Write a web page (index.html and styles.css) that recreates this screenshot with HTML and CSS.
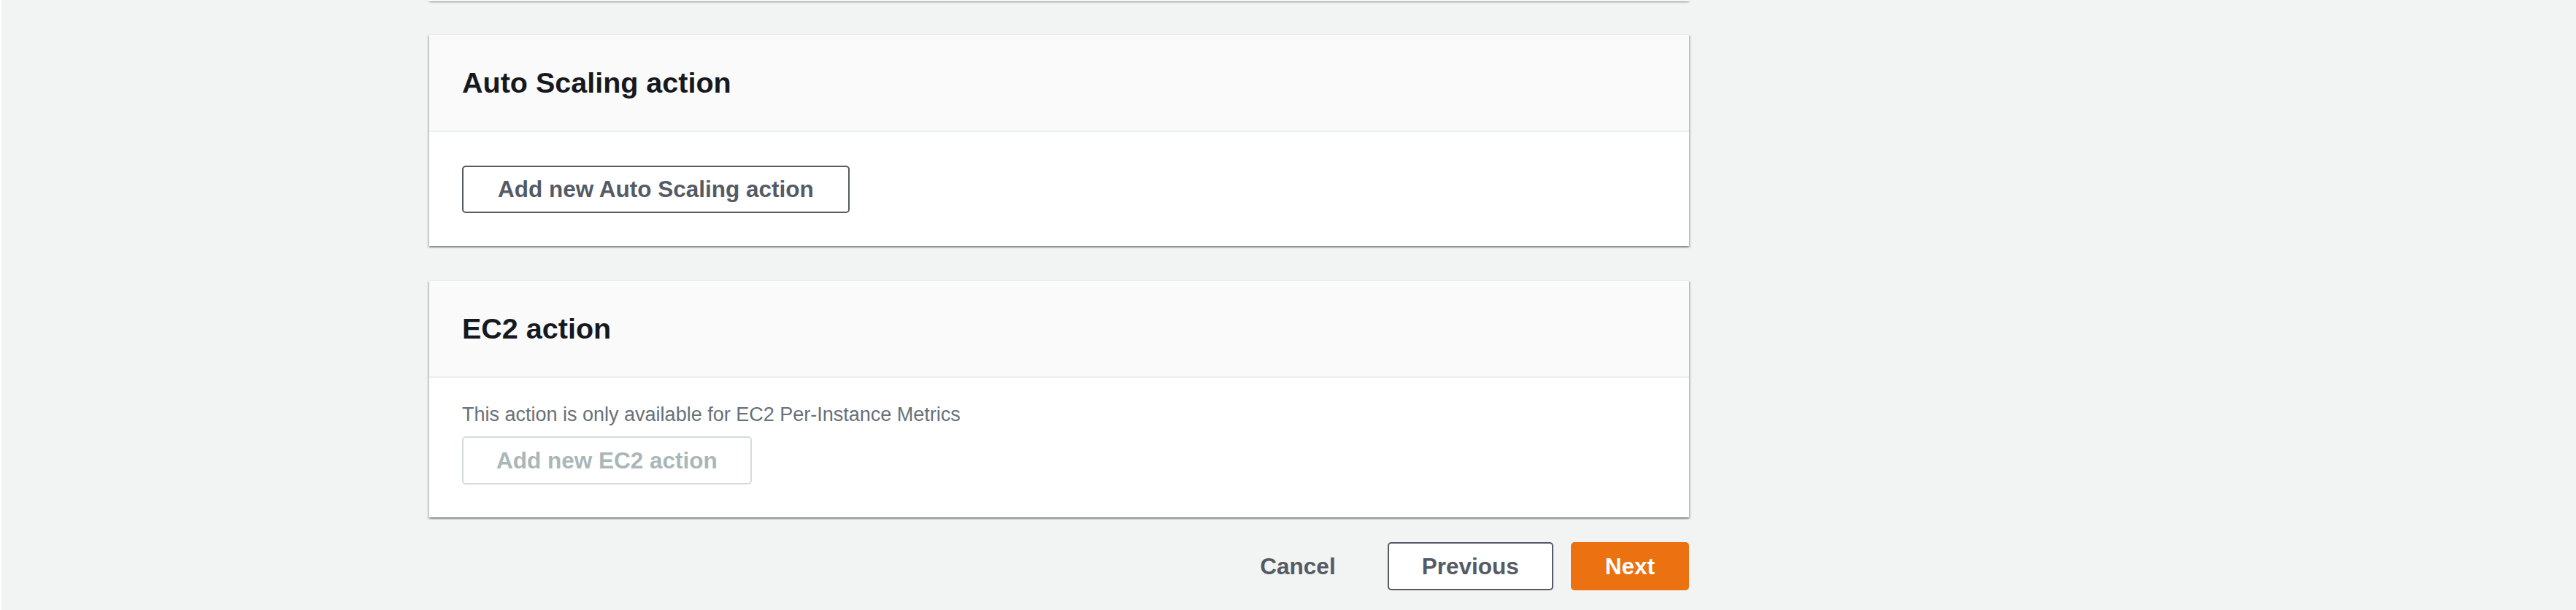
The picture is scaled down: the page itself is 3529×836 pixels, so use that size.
FILE: index.html
```html
<!DOCTYPE html>
<html lang="en">
<head>
<meta charset="utf-8">
<title>Configure actions</title>
<link rel="stylesheet" href="styles.css">
</head>
<body>
<div class="page">
  <main class="main">
    <div class="card card-stub"></div>

    <section class="card card-asg">
      <header class="card-header"><h2>Auto Scaling action</h2></header>
      <div class="card-body body-asg">
        <button class="btn btn-normal btn-wide" type="button">Add new Auto Scaling action</button>
      </div>
    </section>

    <section class="card card-ec2">
      <header class="card-header"><h2>EC2 action</h2></header>
      <div class="card-body body-ec2">
        <p class="hint">This action is only available for EC2 Per-Instance Metrics</p>
        <button class="btn btn-disabled" type="button" disabled>Add new EC2 action</button>
      </div>
    </section>

    <footer class="actions">
      <button class="btn btn-link" type="button">Cancel</button>
      <button class="btn btn-normal" type="button">Previous</button>
      <button class="btn btn-primary" type="button">Next</button>
    </footer>
  </main>
</div>
</body>
</html>
```

FILE: styles.css
```css
html, body {
  margin: 0;
  padding: 0;
}

body {
  background: #f2f3f3;
  font-family: "Liberation Sans", Arial, sans-serif;
  color: #16191f;
  height: 836px;
  overflow: hidden;
  border-left: 2px solid #ffffff;
  box-sizing: border-box;
}

.page {
  display: grid;
  grid-template-columns: 586px 1726px 1fr;
}

.main {
  grid-column: 2;
  display: flex;
  flex-direction: column;
}

.card {
  background: #ffffff;
  box-shadow:
    0 2px 2px 0 rgba(0, 28, 36, 0.3),
    2px 2px 2px 0 rgba(0, 28, 36, 0.15),
    -2px 2px 2px 0 rgba(0, 28, 36, 0.15);
}

.card-stub {
  height: 1px;
}

.card-asg {
  margin-top: 46px;
  border-top: 1px solid #eaeded;
}

.card-ec2 {
  margin-top: 47px;
  border-top: 1px solid #eaeded;
}

.card-header {
  background: #fafafa;
  border-bottom: 2px solid #eaeded;
  height: 133px;
  padding: 0 45px;
  display: flex;
  align-items: center;
  box-sizing: border-box;
}

.card-header h2 {
  margin: 0;
  font-size: 39.5px;
  line-height: 59px;
  font-weight: 700;
  color: #16191f;
}

.card-body {
  padding: 0 45px;
  display: flex;
  flex-direction: column;
  align-items: flex-start;
}

.body-asg {
  padding-top: 46px;
  padding-bottom: 45px;
}

.body-ec2 {
  padding-top: 30px;
  padding-bottom: 45px;
}

.hint {
  margin: 0 0 9px 0;
  font-size: 27px;
  line-height: 41px;
  color: #687078;
}

.btn {
  font-family: "Liberation Sans", Arial, sans-serif;
  font-size: 31.5px;
  font-weight: 700;
  line-height: 61px;
  height: 65px;
  padding: 0 45px;
  border: 2px solid transparent;
  border-radius: 5px;
  background: transparent;
  color: #545b64;
  box-sizing: border-box;
  white-space: nowrap;
}

.btn-wide {
  padding: 0 47px;
}

.btn-normal {
  background: #ffffff;
  border-color: #545b64;
  color: #545b64;
}

.btn-disabled {
  background: #ffffff;
  border-color: #d5dbdb;
  color: #aab7b8;
  height: 66px;
  line-height: 62px;
}

.btn-link {
  color: #545b64;
}

.btn-primary {
  background: #ec7211;
  border-color: #ec7211;
  color: #ffffff;
}

.actions {
  margin-top: 34px;
  display: flex;
  justify-content: flex-end;
  gap: 24px;
}

.actions .btn {
  height: 66px;
  line-height: 62px;
}
```
